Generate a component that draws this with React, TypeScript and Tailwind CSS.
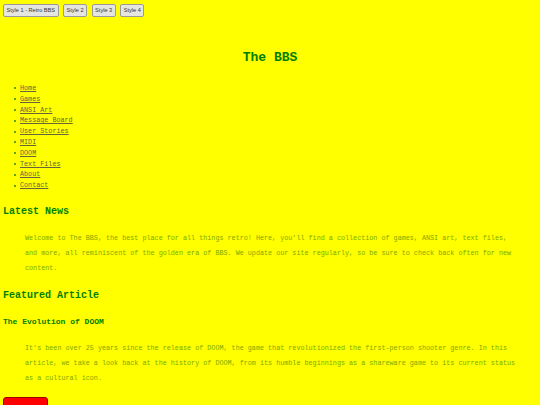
import React, { useState } from 'react';

const styles = ['Style 1 - Retro BBS', 'Style 2', 'Style 3', 'Style 4'];

const navLinks = [
  'Home',
  'Games',
  'ANSI Art',
  'Message Board',
  'User Stories',
  'MIDI',
  'DOOM',
  'Text Files',
  'About',
  'Contact',
];

const App: React.FC = () => {
  const [activeStyle, setActiveStyle] = useState(0);

  return (
    <div
      className="min-h-screen bg-[#ffff00] px-[3px] text-[#7eaa00]"
      style={{ fontFamily: '"Liberation Mono", "Courier New", monospace' }}
      data-style={activeStyle}
    >
      {/* Style switcher */}
      <div className="flex gap-[4.5px] pt-[4px]">
        {styles.map((label, i) => (
          <button
            key={label}
            onClick={() => setActiveStyle(i)}
            className="h-[13px] rounded-[2px] border border-[#9a9a9a] bg-[#e6e6e0] px-[2.5px] text-[5.6px] leading-none text-[#333]"
            style={{ fontFamily: '"Liberation Sans", Arial, sans-serif' }}
          >
            {label}
          </button>
        ))}
      </div>

      {/* Header */}
      <h1 className="mt-[33px] text-center text-[13px] font-bold leading-[16px] text-[#008000]">
        The BBS
      </h1>

      {/* Navigation */}
      <ul className="mt-[17px] pl-[11px] text-[6.75px] leading-[10.8px]">
        {navLinks.map((link) => (
          <li key={link} className="flex items-center">
            <span className="mr-[4px] h-[2px] w-[2px] rounded-full bg-[#2a8a00]" />
            <a href="#" className="text-[#66663a] underline">
              {link}
            </a>
          </li>
        ))}
      </ul>

      {/* Latest news */}
      <h2 className="mt-[15px] text-[10px] font-bold leading-[12px] text-[#008000]">Latest News</h2>
      <p className="mx-[20px] mt-[13.5px] pl-[2px] text-[6.75px] leading-[15px]">
        Welcome to The BBS, the best place for all things retro! Here, you'll find a collection of
        games, ANSI art, text files, and more, all reminiscent of the golden era of BBS. We update
        our site regularly, so be sure to check back often for new content.
      </p>

      {/* Featured article */}
      <h2 className="mt-[13.5px] text-[10px] font-bold leading-[12px] text-[#008000]">
        Featured Article
      </h2>
      <h3 className="mt-[15px] text-[8px] font-bold leading-[10px] text-[#008000]">
        The Evolution of DOOM
      </h3>
      <p className="mx-[20px] mt-[14.5px] pl-[2px] text-[6.75px] leading-[15px]">
        It's been over 25 years since the release of DOOM, the game that revolutionized the
        first-person shooter genre. In this article, we take a look back at the history of DOOM,
        from its humble beginnings as a shareware game to its current status as a cultural icon.
      </p>
      <button
        aria-label="Read More"
        className="mt-[10.5px] block h-[30px] w-[45px] rounded-t-[3px] border border-[#a00000] bg-[#ff0000]"
      />
    </div>
  );
};

export default App;
